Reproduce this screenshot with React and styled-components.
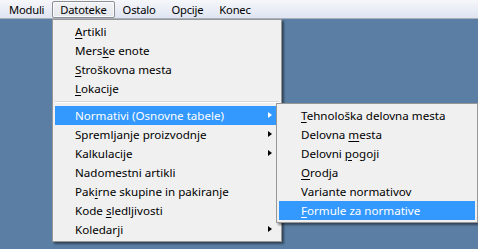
import React from "react";
import styled, { createGlobalStyle } from "styled-components";

const Global = createGlobalStyle`
  html, body { margin: 0; padding: 0; }
  body { width: 478px; height: 249px; overflow: hidden; font-family: "Noto Sans", "DejaVu Sans", sans-serif; }
  #root { width: 478px; height: 249px; }
`;

const Screen = styled.div`
  width: 478px;
  height: 249px;
  display: flex;
  flex-direction: column;
  background: #5b7fa4;
  position: relative;
  overflow: hidden;
`;

const MenuBar = styled.div`
  height: 18px;
  border-bottom: 1px solid #a9b0bc;
  background: linear-gradient(#f6f7fb, #dfe4f1);
  display: flex;
  align-items: center;
  padding-left: 1px;
  font-size: 11.2px;
  letter-spacing: -0.2px;
  color: #000;
`;

const BarItem = styled.div`
  height: 17px;
  line-height: 15px;
  padding: 0 7px;
  box-sizing: border-box;
  border: 1px solid ${(p) => (p.$open ? "#8c8f96" : "transparent")};
  border-radius: 2px;
  background: ${(p) => (p.$open ? "linear-gradient(#f2f3f6, #e3e6ec)" : "transparent")};
  box-shadow: ${(p) => (p.$open ? "inset 0 0 0 1px #fbfbfc" : "none")};
`;

const Desktop = styled.div`
  flex: 1;
`;

const Menu = styled.div`
  position: absolute;
  left: ${(p) => p.$x}px;
  top: ${(p) => p.$y}px;
  width: ${(p) => p.$w}px;
  box-sizing: border-box;
  background: #f0f0f0;
  border: 1px solid #979797;
  padding: 2px;
  box-shadow: 2px 2px 2px rgba(0, 0, 0, 0.45);
  font-size: 11.6px;
  color: #000;
`;

const Item = styled.div`
  height: 19px;
  line-height: 19px;
  display: flex;
  align-items: center;
  padding-left: ${(p) => p.$indent}px;
  position: relative;
  background: ${(p) => (p.$active ? "#3399ff" : "transparent")};
  color: ${(p) => (p.$active ? "#fff" : "#000")};
  white-space: pre;
`;

const Label = styled.span`
  white-space: pre;
`;

const Arrow = styled.span`
  position: absolute;
  right: 7px;
  top: 6px;
  width: 0;
  height: 0;
  border-top: 3.5px solid transparent;
  border-bottom: 3.5px solid transparent;
  border-left: 4px solid ${(p) => (p.$active ? "#fff" : "#000")};
`;

const Separator = styled.div`
  height: 8px;
  display: flex;
  align-items: center;
  &::after {
    content: "";
    flex: 1;
    height: 1px;
    background: #d7d7d7;
    border-bottom: 1px solid #fff;
  }
`;

const U = styled.span`
  text-decoration: underline;
  text-underline-offset: 2px;
`;

const renderLabel = (label) => {
  const parts = label.split(/(_.)/);
  return (
    <Label>
      {parts.map((p, i) =>
        p.startsWith("_") ? <U key={i}>{p.slice(1)}</U> : <React.Fragment key={i}>{p}</React.Fragment>
      )}
    </Label>
  );
};

const main = [
  { t: "_Artikli" },
  { t: "Mers_ke enote" },
  { t: "_Stroškovna mesta" },
  { t: "_Lokacije" },
  { sep: true },
  { t: "Normativi (Osnovne tabele)", sub: true, active: true },
  { t: "Spremljanje proizvodnje", sub: true },
  { t: "Kalkulacije", sub: true },
  { t: "Nadomestni artikli" },
  { t: "Pak_irne skupine in pakiranje" },
  { t: "Kode _sledljivosti" },
  { t: "Koledarji", sub: true },
];

const sub = [
  { t: "_Tehnološka delovna mesta" },
  { t: "Delovna _mesta" },
  { t: "Delovni _pogoji" },
  { t: "_Orodja" },
  { t: "Variante normativov" },
  { t: "_Formule za normative", active: true },
];

export default function App() {
  return (
    <>
      <Global />
      <Screen>
        <MenuBar>
          <BarItem>Moduli</BarItem>
          <BarItem $open>Datoteke</BarItem>
          <BarItem>Ostalo</BarItem>
          <BarItem>Opcije</BarItem>
          <BarItem>Konec</BarItem>
        </MenuBar>
        <Desktop />
        <Menu $x={52} $y={19} $w={230}>
          {main.map((m, i) =>
            m.sep ? (
              <Separator key={i} />
            ) : (
              <Item key={i} $indent={20} $active={m.active}>
                {renderLabel(m.t)}
                {m.sub && <Arrow $active={m.active} />}
              </Item>
            )
          )}
        </Menu>
        <Menu $x={276} $y={103} $w={202}>
          {sub.map((m, i) => (
            <Item key={i} $indent={22} $active={m.active}>
              {renderLabel(m.t)}
            </Item>
          ))}
        </Menu>
      </Screen>
    </>
  );
}
